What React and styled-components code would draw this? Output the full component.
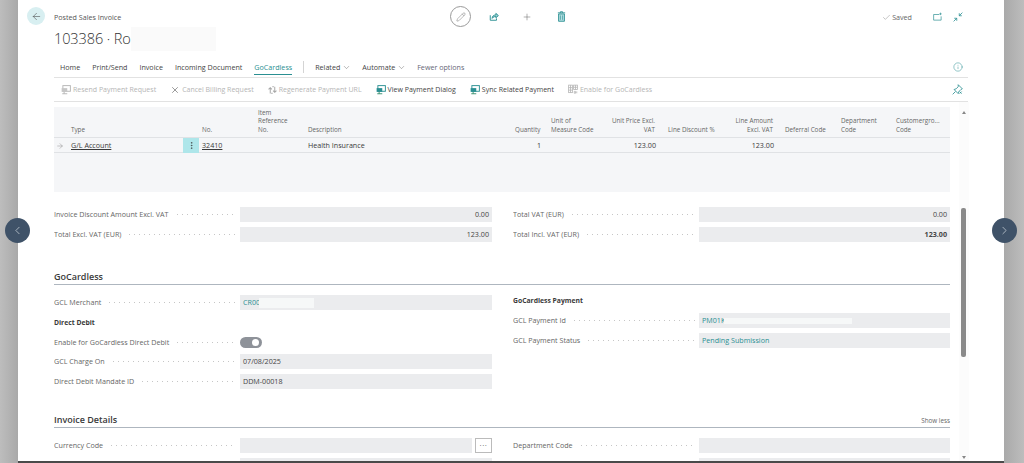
import React from "react";
import styled, { createGlobalStyle } from "styled-components";
import { ArrowLeft, ArrowRight, Check, ChevronDown, ChevronLeft, ChevronRight, EllipsisVertical, Info, Pencil, Plus, X } from "lucide-react";

const GlobalStyle = createGlobalStyle`
  html, body { margin: 0; padding: 0; height: 100%; overflow: hidden; }
  body { background: #fff; font-family: "Open Sans", "Noto Sans", sans-serif; color: #3a3a3a; }
`;

const teal = "#2a8f92";

const Page = styled.div`
  display: flex;
  height: 463px;
  width: 1024px;
  position: relative;
  overflow: hidden;
`;

const Side = styled.div`
  flex: none;
  width: ${p => p.$w}px;
  background: linear-gradient(${p => (p.$right ? "to right" : "to left")}, #a9a9a9, #bdbdbd);
`;

const Main = styled.div`
  flex: 1;
  min-width: 0;
  padding: 0 36px;
  overflow: hidden;
  border-bottom: 2px solid #4a4a4a;
  box-sizing: border-box;
`;

const Header = styled.div`
  display: flex;
  height: 59px;
`;

const Titles = styled.div`
  width: 396px;
  padding-top: 12px;
`;

const Crumb = styled.div`
  font-size: 7.15px;
  line-height: 11px;
  color: #555;
`;

const Title = styled.div`
  position: relative;
  margin-top: 4px;
  font-size: 14.5px;
  font-weight: 300;
  letter-spacing: -0.1px;
  line-height: 24px;
  color: #333;
`;

const Redact = styled.div`
  position: absolute;
  top: ${p => p.$top || 0}px;
  left: ${p => p.$left}px;
  width: ${p => p.$w}px;
  height: ${p => p.$h}px;
  background: ${p => p.$bg || "#fafafa"};
`;

const BackButton = styled.div`
  position: absolute;
  left: 27px;
  top: 7px;
  width: 18px;
  height: 18px;
  border-radius: 50%;
  background: #d8eff1;
  display: flex;
  align-items: center;
  justify-content: center;
  color: #444;
`;

const HeaderIcons = styled.div`
  display: flex;
  align-items: center;
  height: 33px;
`;

const EditCircle = styled.div`
  width: 21px;
  height: 21px;
  box-sizing: border-box;
  border: 1px solid #9a9a9a;
  border-radius: 50%;
  display: flex;
  align-items: center;
  justify-content: center;
  color: #777;
  margin-right: 18px;
  flex: none;
`;

const HeaderIcon = styled.div`
  flex: none;
  display: flex;
  align-items: center;
  justify-content: center;
  width: 10px;
  margin-right: ${p => p.$mr || 0}px;
  color: ${p => p.$color || teal};
`;

const Status = styled.div`
  margin-left: auto;
  margin-right: 5px;
  display: flex;
  align-items: center;
  height: 34px;
`;

const Saved = styled.div`
  display: flex;
  align-items: center;
  gap: 1px;
  margin-right: 21px;
  font-size: 7.15px;
  color: #666;
`;

const TabBar = styled.div`
  display: flex;
  align-items: center;
  height: 19px;
  width: 914px;
  border-bottom: 1px solid #e2e2e2;
  padding: 0 0 2px 6px;
  box-sizing: border-box;
  font-size: 7.15px;
`;

const Tab = styled.div`
  margin-right: ${p => p.$mr ?? 12}px;
  color: ${p => (p.$active ? teal : p.$muted ? "#667" : "#444")};
  position: relative;
  display: flex;
  align-items: center;
  gap: 2px;
  line-height: 16px;
  ${p => p.$active && `&::after { content: ""; position: absolute; left: 0; right: 0; bottom: 0; height: 1px; background: ${teal}; }`}
`;

const TabDivider = styled.div`
  width: 1px;
  height: 12px;
  background: #d4d4d4;
  margin: 0 11px 0 0;
`;

const TabEnd = styled.div`
  margin-left: auto;
  margin-right: 5px;
  color: ${teal};
  display: flex;
`;

const ActionBar = styled.div`
  display: flex;
  align-items: center;
  height: 24px;
  width: 914px;
  border-bottom: 1px solid #e2e2e2;
  padding-left: 7px;
  box-sizing: border-box;
  font-size: 7px;
`;

const Action = styled.div`
  display: flex;
  align-items: center;
  gap: 2px;
  margin-right: 14px;
  color: ${p => (p.$off ? "#b5b5b5" : "#444")};
`;

const Body = styled.div`
  position: relative;
  padding-top: 5px;
`;

const Scrollbar = styled.div`
  position: absolute;
  left: 905px;
  top: 0;
  width: 10px;
  height: 360px;
  background: #fcfcfc;
  display: flex;
  flex-direction: column;
  align-items: center;
  justify-content: space-between;
`;

const Thumb = styled.div`
  position: absolute;
  left: 2px;
  top: 106px;
  width: 5px;
  height: 149px;
  border-radius: 2px;
  background: #8a8a8a;
`;

const Triangle = styled.div`
  width: 0;
  height: 0;
  border-left: 2.5px solid transparent;
  border-right: 2.5px solid transparent;
  ${p => (p.$down ? "border-top: 3px solid #888; margin-bottom: 3px;" : "border-bottom: 3px solid #888; margin-top: 9px;")}
`;

const Table = styled.div`
  width: 896px;
  height: 85px;
  background: #f5f6f8;
  font-size: 6.3px;
  color: #666;
`;

const HeadRow = styled.div`
  display: grid;
  grid-template-columns: ${p => p.$cols};
  height: 31px;
  border-bottom: 1px solid #e0e2e5;
  align-items: end;
  box-sizing: border-box;
`;

const HeadCell = styled.div`
  line-height: 8.5px;
  padding-bottom: 3px;
  padding-left: ${p => p.$pad || 0}px;
  white-space: nowrap;
  text-align: ${p => (p.$right ? "right" : "left")};
`;

const DataRow = styled.div`
  display: grid;
  grid-template-columns: ${p => p.$cols};
  height: 15px;
  border-bottom: 1px solid #e0e2e5;
  box-sizing: border-box;
  align-items: center;
  font-size: 7.15px;
  line-height: 12px;
  color: #3a3a3a;
`;

const DataCell = styled.div`
  text-align: ${p => (p.$right ? "right" : "left")};
  text-decoration: ${p => (p.$link ? "underline" : "none")};
  padding-left: ${p => p.$pad || 0}px;
  padding-bottom: 1px;
  margin-right: ${p => (p.$right ? -1 : 0)}px;
`;

const RowMark = styled.div`
  display: flex;
  justify-content: center;
  padding-right: 5px;
  color: #777;
`;

const MenuCell = styled.div`
  background: #aee6ea;
  height: 15px;
  display: flex;
  align-items: center;
  justify-content: center;
  color: #333;
`;

const Columns = styled.div`
  display: grid;
  grid-template-columns: 438px 437px;
  column-gap: 21px;
  width: 896px;
  margin-top: ${p => p.$mt}px;
`;

const Column = styled.div`
  display: flex;
  flex-direction: column;
  gap: 5px;
`;

const Field = styled.div`
  display: flex;
  align-items: center;
  height: ${p => p.$h || 15}px;
`;

const Label = styled.div`
  flex: none;
  width: 186px;
  display: flex;
  align-items: center;
  padding-bottom: 1px;
  font-size: 7.15px;
  color: #666;
  white-space: nowrap;
  overflow: hidden;
  &::after {
    content: "";
    flex: 1;
    margin: 1px 4px 0 6px;
    height: 1px;
    background-image: radial-gradient(circle, #c6c6c6 0.5px, transparent 0.6px);
    background-size: 5px 1px;
  }
`;

const Value = styled.div`
  position: relative;
  flex: 1;
  height: 15px;
  background: #ebecee;
  font-size: 7.15px;
  line-height: 14px;
  padding: 0 3px;
  color: ${p => (p.$link ? teal : "#444")};
  text-align: ${p => (p.$right ? "right" : "left")};
  font-weight: ${p => (p.$bold ? 700 : 400)};
`;

const Toggle = styled.div`
  width: 22px;
  height: 11px;
  border-radius: 6px;
  background: #8e9299;
  position: relative;
  &::after {
    content: "";
    position: absolute;
    right: 3px;
    top: 2px;
    width: 7px;
    height: 7px;
    border-radius: 50%;
    background: #fff;
  }
`;

const Section = styled.div`
  width: 896px;
  display: flex;
  justify-content: space-between;
  align-items: flex-end;
  margin-top: ${p => p.$mt}px;
  height: 17px;
  border-bottom: 1px solid #aeb6bf;
  font-size: 9px;
  font-weight: 600;
  color: #3a3a3a;
  line-height: 14px;
`;

const ShowLess = styled.span`
  font-size: 6.3px;
  font-weight: 400;
  color: #666;
  line-height: 12px;
`;

const SubHead = styled.div`
  font-size: 6.8px;
  font-weight: 700;
  color: #3a3a3a;
  height: ${p => p.$h}px;
  line-height: ${p => p.$h}px;
`;

const LookupRow = styled.div`
  flex: 1;
  display: flex;
  gap: 3px;
`;

const Lookup = styled.div`
  flex: none;
  width: 17px;
  height: 15px;
  box-sizing: border-box;
  border: 1px solid #bbb;
  font-size: 8px;
  line-height: 12px;
  text-align: center;
  color: #555;
  letter-spacing: 0.5px;
`;

const NavButton = styled.div`
  position: absolute;
  top: 218px;
  left: ${p => p.$left}px;
  width: 25px;
  height: 25px;
  border-radius: 50%;
  background: #3f5268;
  color: #dfe4ea;
  display: flex;
  align-items: center;
  justify-content: center;
`;

const tableCols = "17px 112px 16px 59px 50px 207px 25px 11px 59px 45px 13px 57px 48px 12px 56px 55px 54px";

function ShareIcon() {
  return (
    <svg width="11" height="11" viewBox="0 0 16 16" fill="none" stroke="currentColor" strokeWidth="1.5">
      <path d="M2 6v8h10v-3" />
      <path d="M5 11c0-3.500 2.500-5.500 6-5.500V3l4 3.500L11 10V8c-2.500 0-4.500 1-6 3z" fill="#9fd3d5" />
    </svg>
  );
}

function TrashIcon() {
  return (
    <svg width="9" height="11" viewBox="0 0 12 15" fill="#b5dfe1" stroke={teal} strokeWidth="1.2">
      <path d="M2 4h8v10H2z" />
      <path d="M1 2.500h10M4.500 2.500V1h3v1.500" fill="none" />
      <path d="M4.500 6v6M7.500 6v6" fill="none" strokeWidth="0.9" />
    </svg>
  );
}

function WindowIcon() {
  return (
    <svg width="10" height="10" viewBox="0 0 16 16" fill="none" stroke="currentColor" strokeWidth="1.1">
      <path d="M10 4H1v9h12V7" />
      <path d="M12 1v4M10 3h4" strokeWidth="1" />
    </svg>
  );
}

function CollapseIcon() {
  return (
    <svg width="10" height="10" viewBox="0 0 16 16" fill="none" stroke="currentColor" strokeWidth="1.3">
      <path d="M15 1l-5 5M10 2v4h4M1 15l5-5M2 10h4v4" />
    </svg>
  );
}

function PinIcon() {
  return (
    <svg width="11" height="11" viewBox="0 0 16 16" fill="none" stroke="currentColor" strokeWidth="1.2">
      <path d="M9 1l6 6-2 1-3 3-1 3-6-6 3-1 3-3zM5 11l-4 4" />
      <path d="M11 11l3 3M14 11l-3 3" />
    </svg>
  );
}

function CardIcon({ off }) {
  return (
    <svg width="10" height="10" viewBox="0 0 16 16">
      <rect x="3" y="1" width="12" height="9" fill="none" stroke={off ? "#b5b5b5" : teal} strokeWidth="1.5" />
      <rect x="1" y="5" width="9" height="6" fill={off ? "#c6c6c6" : teal} />
      <path d="M5 11v3M2 14h8" stroke={off ? "#b5b5b5" : "#3a8f6e"} strokeWidth="1.5" />
    </svg>
  );
}

function SwapIcon() {
  return (
    <svg width="9" height="10" viewBox="0 0 16 16" fill="none" stroke="#a8a8a8" strokeWidth="1.800">
      <path d="M4 14V5M1 7l3-3 3 3M12 2v9M9 9l3 3 3-3" />
      <path d="M8 2h2M6 14h2" />
    </svg>
  );
}

function GridIcon() {
  return (
    <svg width="10" height="11" viewBox="0 0 16 16" fill="none" stroke="#b5b5b5" strokeWidth="1.3">
      <rect x="1" y="1" width="6" height="12" />
      <rect x="9" y="1" width="6" height="7" />
      <path d="M1 5h6M1 9h6M9 4.500h6M4 1v12M12 1v7M10 11h2v3h-2zM14 11v3" />
    </svg>
  );
}

export default function App() {
  return (
    <Page>
      <GlobalStyle />
      <Side $w={18} />
      <Main>
        <Header>
          <Titles>
            <Crumb>Posted Sales Invoice</Crumb>
            <Title>
              103386 · Ro
              <Redact $left={77} $w={85} $h={24} />
            </Title>
          </Titles>
          <HeaderIcons>
            <EditCircle><Pencil size={10} strokeWidth={1.2} /></EditCircle>
            <HeaderIcon $mr={23}><ShareIcon /></HeaderIcon>
            <HeaderIcon $mr={24} $color="#555"><Plus size={14} strokeWidth={1.1} /></HeaderIcon>
            <HeaderIcon><TrashIcon /></HeaderIcon>
          </HeaderIcons>
          <Status>
            <Saved><Check size={9} strokeWidth={1} />Saved</Saved>
            <HeaderIcon $mr={10}><WindowIcon /></HeaderIcon>
            <HeaderIcon><CollapseIcon /></HeaderIcon>
          </Status>
        </Header>
        <TabBar>
          <Tab>Home</Tab>
          <Tab>Print/Send</Tab>
          <Tab>Invoice</Tab>
          <Tab>Incoming Document</Tab>
          <Tab $active $mr={11}>GoCardless</Tab>
          <TabDivider />
          <Tab $mr={11}>Related <ChevronDown size={9} strokeWidth={1} /></Tab>
          <Tab $mr={11}>Automate <ChevronDown size={9} strokeWidth={1} /></Tab>
          <Tab $muted>Fewer options</Tab>
          <TabEnd><Info size={10} strokeWidth={1.2} /></TabEnd>
        </TabBar>
        <ActionBar>
          <Action $off><CardIcon off />Resend Payment Request</Action>
          <Action $off><X size={10} strokeWidth={1.8} color="#777" />Cancel Billing Request</Action>
          <Action $off><SwapIcon />Regenerate Payment URL</Action>
          <Action><CardIcon />View Payment Dialog</Action>
          <Action><CardIcon />Sync Related Payment</Action>
          <Action $off><GridIcon />Enable for GoCardless</Action>
          <TabEnd><PinIcon /></TabEnd>
        </ActionBar>
        <Body>
          <Scrollbar>
            <Triangle />
            <Thumb />
            <Triangle $down />
          </Scrollbar>
          <Table>
            <HeadRow $cols={tableCols}>
              <span />
              <HeadCell>Type</HeadCell>
              <span />
              <HeadCell $pad={3}>No.</HeadCell>
              <HeadCell>Item<br />Reference<br />No.</HeadCell>
              <HeadCell>Description</HeadCell>
              <HeadCell $right>Quantity</HeadCell>
              <span />
              <HeadCell>Unit of<br />Measure Code</HeadCell>
              <HeadCell $right>Unit Price Excl.<br />VAT</HeadCell>
              <span />
              <HeadCell>Line Discount %</HeadCell>
              <HeadCell $right>Line Amount<br />Excl. VAT</HeadCell>
              <span />
              <HeadCell>Deferral Code</HeadCell>
              <HeadCell>Department<br />Code</HeadCell>
              <HeadCell>Customergro...<br />Code</HeadCell>
            </HeadRow>
            <DataRow $cols={tableCols}>
              <RowMark><ArrowRight size={8} strokeWidth={1.2} /></RowMark>
              <DataCell $link>G/L Account</DataCell>
              <MenuCell><EllipsisVertical size={9} strokeWidth={1.5} /></MenuCell>
              <DataCell $link $pad={3}>32410</DataCell>
              <span />
              <DataCell>Health Insurance</DataCell>
              <DataCell $right>1</DataCell>
              <span />
              <span />
              <DataCell $right>123.00</DataCell>
              <span />
              <span />
              <DataCell $right>123.00</DataCell>
            </DataRow>
          </Table>
          <Columns $mt={15}>
            <Column>
              <Field><Label>Invoice Discount Amount Excl. VAT</Label><Value $right>0.00</Value></Field>
              <Field><Label>Total Excl. VAT (EUR)</Label><Value $right>123.00</Value></Field>
            </Column>
            <Column>
              <Field><Label>Total VAT (EUR)</Label><Value $right>0.00</Value></Field>
              <Field><Label>Total Incl. VAT (EUR)</Label><Value $right $bold>123.00</Value></Field>
            </Column>
          </Columns>
          <Section $mt={25}>GoCardless</Section>
          <Columns $mt={10}>
            <Column>
              <Field>
                <Label>GCL Merchant</Label>
                <Value $link>CR00<Redact $left={19} $w={55} $h={10} $top={3} $bg="#f6f8f8" /></Value>
              </Field>
              <SubHead $h={15}>Direct Debit</SubHead>
              <Field $h={14}><Label>Enable for GoCardless Direct Debit</Label><Toggle /></Field>
              <Field><Label>GCL Charge On</Label><Value>07/08/2025</Value></Field>
              <Field><Label>Direct Debit Mandate ID</Label><Value>DDM-00018</Value></Field>
            </Column>
            <Column>
              <SubHead $h={12.5}>GoCardless Payment</SubHead>
              <Field>
                <Label>GCL Payment Id</Label>
                <Value $link>PM01K<Redact $left={25} $w={128} $h={6} $top={5} $bg="#f6f8f8" /></Value>
              </Field>
              <Field><Label>GCL Payment Status</Label><Value $link>Pending Submission</Value></Field>
            </Column>
          </Columns>
          <Section $mt={21}>Invoice Details<ShowLess>Show less</ShowLess></Section>
          <Columns $mt={10}>
            <Column>
              <Field>
                <Label>Currency Code</Label>
                <LookupRow><Value /><Lookup>···</Lookup></LookupRow>
              </Field>
              <Field><Label /><Value /></Field>
            </Column>
            <Column>
              <Field><Label>Department Code</Label><Value /></Field>
              <Field><Label /><Value /></Field>
            </Column>
          </Columns>
        </Body>
      </Main>
      <Side $w={20} $right />
      <BackButton><ArrowLeft size={11} strokeWidth={1.2} /></BackButton>
      <NavButton $left={5}><ChevronLeft size={13} strokeWidth={1.2} /></NavButton>
      <NavButton $left={992}><ChevronRight size={13} strokeWidth={1.2} /></NavButton>
    </Page>
  );
}
